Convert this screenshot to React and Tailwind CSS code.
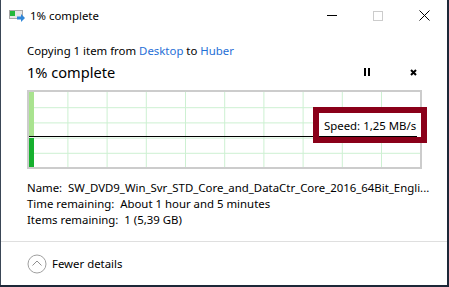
import React from "react";

const font = { fontFamily: '"Noto Sans", "Liberation Sans", sans-serif' };

const TitleIcon = () => (
  <svg width="17" height="12" viewBox="0 0 17 12">
    <rect x="0.5" y="0.5" width="13" height="8" fill="#e6e6e6" stroke="#a8a8a8" />
    <rect x="1" y="1" width="5" height="5" fill="#22b83a" />
    <path d="M8 6.5h4V4l4 4-4 4V9.5H8z" fill="#2f86d8" />
  </svg>
);

const Graph = () => {
  const cols = [1, 2, 3, 4, 5, 6, 7, 8, 9];
  const rows = [1, 2, 3, 4];
  return (
    <div className="relative mt-[8px] h-[79px] w-[395px] border-2 border-[#cccccc]">
      <svg width="391" height="75" className="block">
        {cols.map((i) => (
          <line key={"c" + i} x1={i * 39.2 - 0.3} x2={i * 39.2 - 0.3} y1="0" y2="75" stroke="#cdf0d2" strokeWidth="1" />
        ))}
        {rows.map((i) => (
          <line key={"r" + i} x1="0" x2="391" y1={i * 15.2 + 0.5} y2={i * 15.2 + 0.5} stroke="#cdf0d2" strokeWidth="1" />
        ))}
        <rect x="0" y="0" width="5" height="45" fill="#a9e38f" />
        <rect x="0" y="46" width="5" height="29" fill="#16b02e" />
        <line x1="0" x2="391" y1="44.5" y2="44.5" stroke="#000" strokeWidth="1.2" />
      </svg>
      <div className="absolute left-[284px] top-[15px] h-[36px] w-[114px] border-[6px] border-[#8a0019] bg-white">
        <div className="mr-[4px] flex h-[24px] items-end whitespace-nowrap border-b border-black pb-[2px] pl-[5px] text-[11.4px] leading-[16px] text-black">
          Speed: 1,25 MB/s
        </div>
      </div>
    </div>
  );
};

export default function App() {
  return (
    <div className="h-[287px] w-[449px] bg-[#1d2838]" style={font}>
      <div className="flex h-[285px] w-[447px] flex-col border-l border-[#3a4656] bg-white text-black">
        {/* title bar */}
        <div className="flex h-[31px] items-center">
          <div className="ml-[8px] mt-[1px] flex">
            <TitleIcon />
          </div>
          <span className="ml-[4px] text-[11.4px] leading-[16px]">1% complete</span>
          <div className="ml-auto flex h-full items-center">
            <div className="flex w-[46px] justify-center">
              <div className="h-px w-[10px] bg-black" />
            </div>
            <div className="flex w-[46px] justify-center">
              <div className="h-[10px] w-[10px] border border-[#cccccc]" />
            </div>
            <div className="flex w-[46px] justify-center">
              <svg width="11" height="11" viewBox="0 0 11 11">
                <path d="M0.5 0.5l10 10M10.5 0.5l-10 10" stroke="#000" strokeWidth="1" />
              </svg>
            </div>
          </div>
        </div>

        <div className="flex flex-col pl-[26px]">
          <div className="mt-[12px] text-[11.4px] leading-[16px]">
            Copying 1 item from <span className="text-[#1f6fd6]">Desktop</span> to{" "}
            <span className="text-[#1f6fd6]">Huber</span>
          </div>
          <div className="mt-[3px] flex h-[20px] items-center">
            <span className="text-[14.6px] leading-[20px]">1% complete</span>
            <div className="ml-auto flex items-center">
              <div className="flex gap-[2px]">
                <div className="h-[8px] w-[2px] bg-black" />
                <div className="h-[8px] w-[2px] bg-black" />
              </div>
              <svg width="7" height="7" viewBox="0 0 7 7" className="ml-[40px] mr-[30px]">
                <path d="M1 1l5 5M6 1l-5 5" stroke="#000" strokeWidth="2" />
              </svg>
            </div>
          </div>
          <Graph />
          <div className="mt-[11px] whitespace-nowrap text-[11.4px] leading-[16px]">
            <div>Name:&nbsp; SW_DVD9_Win_Svr_STD_Core_and_DataCtr_Core_2016_64Bit_Engli...</div>
            <div>Time remaining:&nbsp; About 1 hour and 5 minutes</div>
            <div>Items remaining:&nbsp; 1 (5,39 GB)</div>
          </div>
        </div>

        <div className="mt-[13px] h-px bg-[#dfdfdf]" />
        <div className="flex flex-1 items-center pl-[26px]">
          <svg width="20" height="20" viewBox="0 0 20 20">
            <circle cx="10" cy="10" r="9" fill="none" stroke="#a0a0a0" strokeWidth="1" />
            <path d="M5.5 11.5l4.5-4.5 4.5 4.5" fill="none" stroke="#909090" strokeWidth="1" />
          </svg>
          <span className="ml-[5px] text-[11.4px] leading-[16px]">Fewer details</span>
        </div>
      </div>
    </div>
  );
}
